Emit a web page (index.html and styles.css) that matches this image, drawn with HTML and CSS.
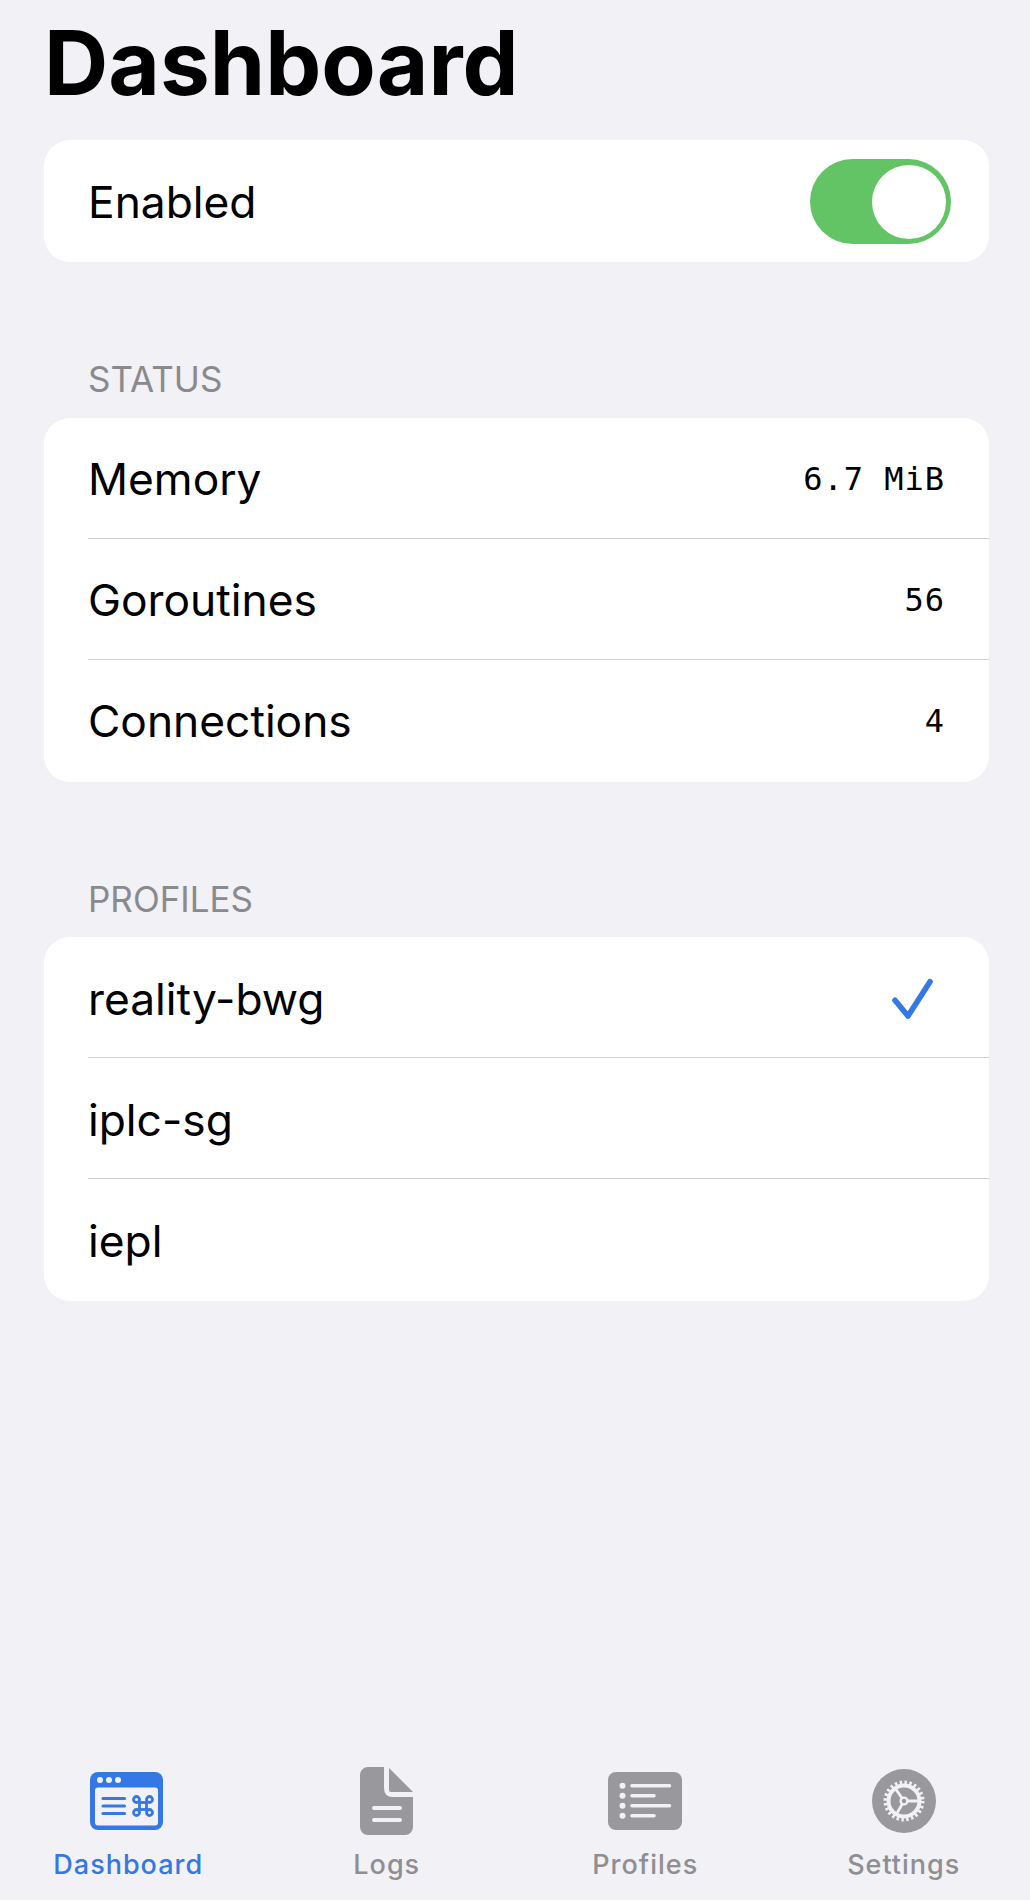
FILE: index.html
```html
<!DOCTYPE html>
<html>
<head>
    <title>Dashboard</title>
    <meta name="viewport" content="width=device-width, initial-scale=1.0">
    <link rel="stylesheet" href="styles.css">
</head>
<body>
    <div class="page">
        <main class="content">
            <h1>Dashboard</h1>

            <div class="card">
                <div class="row">
                    <span>Enabled</span>
                    <div class="switch"><div class="knob"></div></div>
                </div>
            </div>

            <h2>STATUS</h2>
            <div class="card">
                <div class="row"><span>Memory</span><span class="value">6.7 MiB</span></div>
                <div class="row"><span>Goroutines</span><span class="value">56</span></div>
                <div class="row"><span>Connections</span><span class="value">4</span></div>
            </div>

            <h2>PROFILES</h2>
            <div class="card">
                <div class="row">
                    <span>reality-bwg</span>
                    <svg class="check" width="41" height="41" viewBox="0 0 41 41">
                        <path d="M3 22.3 L16 38 L38 3.7" fill="none" stroke="#3478e6" stroke-width="5.6" stroke-linecap="round" stroke-linejoin="round"/>
                    </svg>
                </div>
                <div class="row"><span>iplc-sg</span></div>
                <div class="row"><span>iepl</span></div>
            </div>
        </main>

        <nav class="tabs">
            <div class="tab active">
                <div class="tab-icon">
                    <svg width="73" height="58" viewBox="0 0 73 58">
                        <rect width="73" height="58" rx="8" fill="#3478e6"/>
                        <rect x="5" y="15.5" width="63" height="38" rx="3" fill="#f2f1f5"/>
                        <circle cx="10" cy="8" r="3" fill="#f2f1f5"/>
                        <circle cx="19" cy="8" r="3" fill="#f2f1f5"/>
                        <circle cx="28" cy="8" r="3" fill="#f2f1f5"/>
                        <path d="M13 26.5 H34.5 M13 34 H34.5 M13 41.5 H34.5" stroke="#3478e6" stroke-width="3.2" stroke-linecap="round"/>
                        <g fill="none" stroke="#3478e6" stroke-width="2.8">
                            <rect x="49.5" y="30.5" width="7" height="7"/>
                            <circle cx="46.5" cy="27.5" r="3"/>
                            <circle cx="59.5" cy="27.5" r="3"/>
                            <circle cx="46.5" cy="40.5" r="3"/>
                            <circle cx="59.5" cy="40.5" r="3"/>
                        </g>
                    </svg>
                </div>
                <span>Dashboard</span>
            </div>
            <div class="tab">
                <div class="tab-icon">
                    <svg width="53" height="68" viewBox="0 0 53 68">
                        <path d="M8 0 H24 V21 Q24 30 33 30 H53 V60 A8 8 0 0 1 45 68 H8 A8 8 0 0 1 0 60 V8 A8 8 0 0 1 8 0 Z" fill="#98989d"/>
                        <path d="M29 1 L53 25 H31 Q29 25 29 23 Z" fill="#98989d"/>
                        <path d="M14 41 H40 M14 53 H40" stroke="#f2f1f5" stroke-width="4" stroke-linecap="round"/>
                    </svg>
                </div>
                <span>Logs</span>
            </div>
            <div class="tab">
                <div class="tab-icon">
                    <svg width="74" height="58" viewBox="0 0 74 58">
                        <rect width="74" height="58" rx="8" fill="#98989d"/>
                        <g fill="#f2f1f5">
                            <circle cx="14.5" cy="13.7" r="3"/>
                            <circle cx="14.5" cy="23.7" r="3"/>
                            <circle cx="14.5" cy="33.7" r="3"/>
                            <circle cx="14.5" cy="43.7" r="3"/>
                        </g>
                        <path d="M24 13.7 H61.5 M24 23.7 H46 M24 33.7 H61.5 M24 43.7 H46" stroke="#f2f1f5" stroke-width="3.6" stroke-linecap="round"/>
                    </svg>
                </div>
                <span>Profiles</span>
            </div>
            <div class="tab">
                <div class="tab-icon">
                    <svg width="64" height="64" viewBox="0 0 64 64">
                        <circle cx="32" cy="32" r="32" fill="#98989d"/>
                        <!-- gear teeth: 24 dashes around the ring -->
                        <circle cx="32" cy="32" r="18.5" fill="none" stroke="#f2f1f5" stroke-width="4" stroke-dasharray="2.42 2.42"/>
                        <circle cx="32" cy="32" r="15.5" fill="none" stroke="#f2f1f5" stroke-width="4"/>
                        <path d="M32 32 L46 32 M32 32 L25 44.1 M32 32 L24 20.5" stroke="#f2f1f5" stroke-width="2.8"/>
                        <circle cx="32" cy="32" r="3.4" fill="#98989d" stroke="#f2f1f5" stroke-width="2.4"/>
                    </svg>
                </div>
                <span>Settings</span>
            </div>
        </nav>
    </div>
</body>
</html>
```

FILE: styles.css
```css
* {
    box-sizing: border-box;
}

body {
    margin: 0;
    font-family: Inter, "Noto Sans", sans-serif;
    background-color: #f2f1f5;
    color: #000;
}

.page {
    height: 1900px;
    display: flex;
    flex-direction: column;
    overflow: hidden;
}

.content {
    flex: 1;
    padding: 0 41px 0 44px;
}

h1 {
    margin: 0;
    height: 140px;
    padding-top: 13px;
    font-size: 89px;
    line-height: 100px;
    font-weight: 700;
}

h2 {
    margin: 0;
    height: 155.5px;
    padding: 96px 0 0 44px;
    line-height: 42px;
    font-size: 35px;
    font-weight: 400;
    color: #8a8a8e;
}

.card {
    background-color: #fff;
    border-radius: 26px;
    padding-bottom: 2px;
}

.row {
    height: 121px;
    margin-left: 44px;
    padding-top: 3px;
    padding-right: 45px;
    display: flex;
    align-items: center;
    justify-content: space-between;
    font-size: 44.3px;
    border-top: 1px solid #d1d0d5;
}

.row:first-child {
    height: 120px;
    border-top: none;
}

.value {
    font-family: "DejaVu Sans Mono", monospace;
    font-size: 32px;
    letter-spacing: 1px;
    margin-right: -1px;
}

.switch {
    width: 141px;
    height: 85px;
    margin-right: -7px;
    padding: 6px 5px;
    border-radius: 43px;
    background-color: #63c466;
    display: flex;
    justify-content: flex-end;
}

.knob {
    width: 74px;
    height: 74px;
    border-radius: 50%;
    background-color: #fff;
}

.check {
    margin-right: 11px;
}

.tabs {
    height: 140px;
    margin-left: -1px;
    display: grid;
    grid-template-columns: repeat(4, 258.5px);
}

.tab {
    display: flex;
    flex-direction: column;
    align-items: center;
    font-size: 27px;
    font-weight: 450;
    letter-spacing: 1px;
    color: #8e8e93;
}

.tab.active {
    color: #3478e6;
}

.tab-icon {
    height: 68px;
    margin-top: 7px;
    margin-bottom: 13px;
    display: flex;
    align-items: center;
}

.tab.active .tab-icon {
    margin-right: 3px;
}
```
